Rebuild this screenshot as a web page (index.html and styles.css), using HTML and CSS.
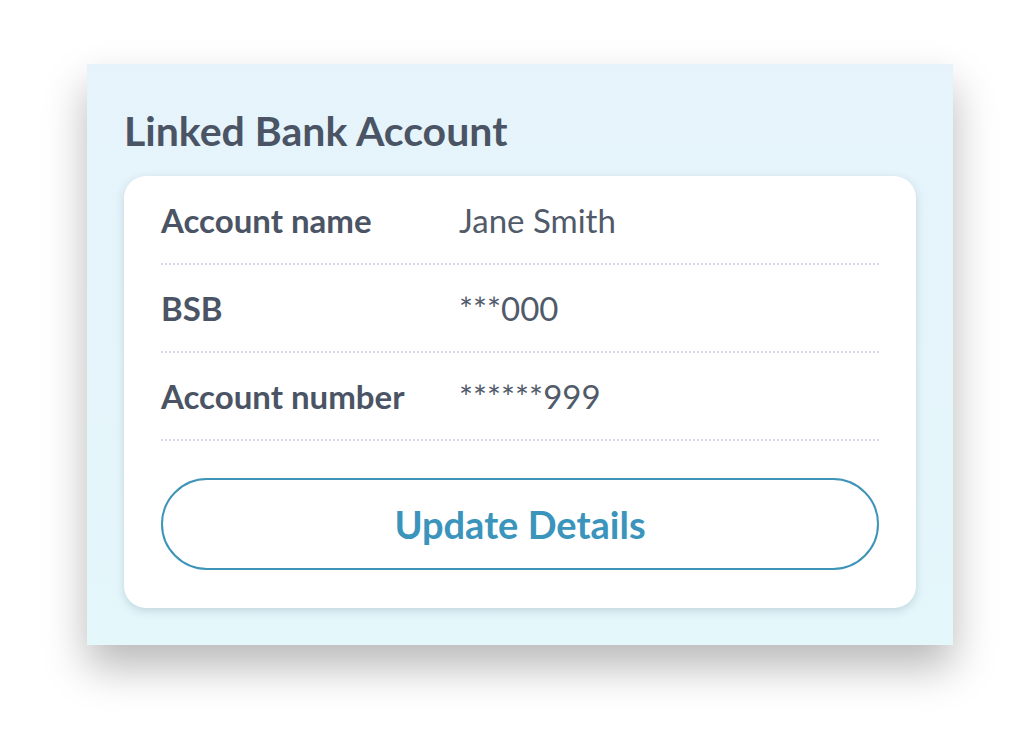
FILE: index.html
```html
<!DOCTYPE html>
<html lang="en">
<head>
    <meta charset="UTF-8">
    <meta name="viewport" content="width=device-width, initial-scale=1.0">
    <title>Linked Bank Account</title>
    <link rel="stylesheet" href="styles.css">
</head>
<body>

<section class="panel">
    <h2 class="panel-title">Linked Bank Account</h2>
    <div class="card">
        <div class="row">
            <span class="label">Account name</span>
            <span class="value">Jane Smith</span>
        </div>
        <div class="row">
            <span class="label">BSB</span>
            <span class="value">***000</span>
        </div>
        <div class="row">
            <span class="label">Account number</span>
            <span class="value">******999</span>
        </div>
        <button class="update-btn">Update Details</button>
    </div>
</section>

</body>
</html>
```

FILE: styles.css
```css
body {
    font-family: Lato, "Open Sans", sans-serif;
    margin: 0;
    padding: 64px 0 0 87px;
    min-height: 732px;
    box-sizing: border-box;
    background-color: #fff;
}

.panel {
    box-sizing: border-box;
    width: 866px;
    height: 581px;
    padding: 0 37px;
    background: linear-gradient(180deg, #e6f3fb 0%, #e4f7fb 100%);
    box-shadow: 0 22px 40px rgba(0, 0, 0, 0.28);
}

.panel-title {
    margin: 0;
    padding-top: 44px;
    height: 68px;
    font-size: 41px;
    font-weight: 700;
    line-height: 46px;
    color: #4a5464;
}

.card {
    background: #fff;
    border-radius: 22px;
    padding: 1px 37px 38px;
    box-shadow: 0 3px 8px rgba(90, 120, 140, 0.25);
}

.row {
    display: flex;
    align-items: center;
    height: 86px;
    border-bottom: 2px dotted #dcd6ef;
    font-size: 33px;
    color: #4a5464;
}

.label {
    width: 298px;
    font-weight: 700;
}

.value {
    font-weight: 400;
    color: #505a69;
}

.update-btn {
    display: block;
    width: 100%;
    height: 92px;
    margin-top: 37px;
    background: #fff;
    border: 2px solid #3d93b8;
    border-radius: 46px;
    font-family: Lato, "Open Sans", sans-serif;
    font-size: 38px;
    font-weight: 700;
    color: #3a94bb;
    cursor: pointer;
}
```
